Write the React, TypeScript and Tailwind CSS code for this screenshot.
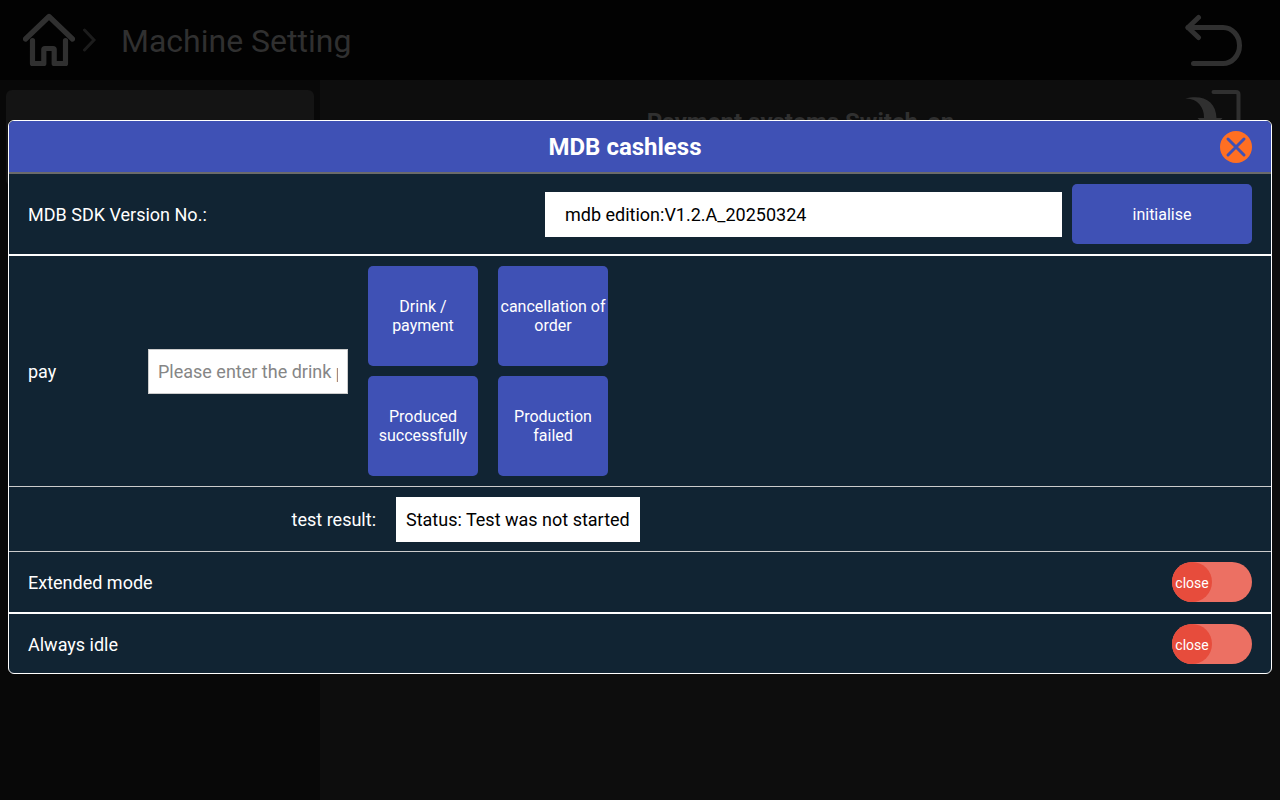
import React, { useState } from 'react';

const actions = ['Drink / payment', 'cancellation of order', 'Produced successfully', 'Production failed'];

function HomeIcon() {
    return (
        <svg width="52" height="54" viewBox="0 0 52 54" fill="none" stroke="currentColor" strokeWidth="5.2" strokeLinecap="round" strokeLinejoin="round">
            <path d="M2.500 26 L26 3.500 L49.500 26" />
            <path d="M9.500 27.500 V50.500 H20.800 V36.500 Q20.800 35.500 22 35.500 H30 Q31.200 35.500 31.200 36.500 V50.500 H42.500 V27.500" />
        </svg>
    );
}

function BackIcon() {
    return (
        <svg width="58" height="54" viewBox="0 0 58 54" fill="none" stroke="currentColor" strokeWidth="5" strokeLinecap="round" strokeLinejoin="round">
            <path d="M13.500 4.500 L3 14.500 L13.500 24.500" />
            <path d="M3 14.500 H38 A16.500 18 0 0 1 38 50.500 H8.500" />
        </svg>
    );
}

function ExitIcon() {
    return (
        <svg width="58" height="58" viewBox="0 0 58 58" fill="none">
            <path d="M28.500 2 H51 Q53.500 2 53.500 4.500 V56 H28.500" stroke="currentColor" strokeWidth="4" strokeLinecap="round" strokeLinejoin="round" />
            <path d="M0 8.500 C18 4 31 11 31.500 28 H37.500 L25 42 L12.500 28 H19 C19.500 17 12 8 0 8.500 Z" fill="currentColor" />
        </svg>
    );
}

function Toggle({ id }: { id: string }) {
    const [on, setOn] = useState(false);
    return (
        <label htmlFor={id} className="relative block h-10 w-20 shrink-0 cursor-pointer rounded-full bg-[#ec7063]">
            <input
                id={id}
                type="checkbox"
                role="switch"
                className="sr-only"
                checked={on}
                onChange={(e) => setOn(e.target.checked)}
            />
            <span className={`flex size-10 items-center justify-center rounded-full bg-[#e74c3c] pt-0.5 text-sm text-white ${on ? 'ml-10' : ''}`}>
                {on ? 'open' : 'close'}
            </span>
        </label>
    );
}

export default function App() {
    const [price, setPrice] = useState('');

    return (
        <div className="relative flex min-h-screen flex-col bg-[#0d0d0d] font-[Roboto,sans-serif]">
            {/* Barra superior */}
            <header className="flex h-20 items-center bg-[#020202] pr-[37px] pl-[23px] text-[#303030]">
                <a href="#home" aria-label="Home"><HomeIcon /></a>
                <svg className="ml-2" width="14" height="24" viewBox="0 0 14 24" fill="none" stroke="#1c1c1c" strokeWidth="3" strokeLinecap="round">
                    <path d="M1.500 2 L11 12 L1.500 22" />
                </svg>
                <h1 className="ml-6 flex-1 pt-0.5 text-[32px]">Machine Setting</h1>
                <button type="button" aria-label="Back"><BackIcon /></button>
            </header>

            {/* Contenido detrás del diálogo */}
            <div className="flex flex-1">
                <aside className="w-1/4 bg-[#080808] px-1.5 pt-2.5">
                    <div className="h-24 rounded-md bg-[#141414]" />
                </aside>
                <section className="flex flex-1 items-start pt-2.5 pr-[37px] text-[#303030]">
                    <h2 className="ml-24 flex-1 pt-4 text-center text-2xl font-bold">Payment systems Switch-on</h2>
                    <ExitIcon />
                </section>
            </div>

            {/* Diálogo */}
            <div className="absolute inset-0 flex items-start px-2 pt-[120px]">
                <div role="dialog" aria-labelledby="dialog-title" className="w-full overflow-hidden rounded-md border border-white bg-[#112433] text-lg text-white">
                    <div className="flex h-[53px] items-center border-b-2 border-[#6b6b6b] bg-[#3f51b5] px-[19px]">
                        <h2 id="dialog-title" className="flex-1 pl-0.5 text-center text-2xl font-bold">MDB cashless</h2>
                        <button type="button" aria-label="Close" className="rounded-full bg-[#ff6f22]">
                            <svg width="32" height="32" viewBox="0 0 32 32" stroke="#3f51b5" strokeWidth="3" strokeLinecap="round">
                                <path d="M8 8 L24 24 M24 8 L8 24" />
                            </svg>
                        </button>
                    </div>

                    <div className="flex h-[82px] items-center border-b-2 border-white px-[19px]">
                        <label htmlFor="version" className="flex-1 pt-0.5">MDB SDK Version No.:</label>
                        <div className="mr-2.5 flex flex-1">
                            <input
                                id="version"
                                readOnly
                                value="mdb edition:V1.2.A_20250324"
                                className="h-[45px] w-full bg-white px-5 text-black"
                            />
                        </div>
                        <button type="button" className="h-[60px] w-[180px] rounded-[5px] bg-[#3f51b5] pt-0.5 text-base">initialise</button>
                    </div>

                    <div className="flex items-center border-b border-[#cccccc] px-[19px] py-2.5">
                        <label htmlFor="price" className="w-[120px] pt-0.5">pay</label>
                        <input
                            id="price"
                            value={price}
                            onChange={(e) => setPrice(e.target.value)}
                            placeholder="Please enter the drink price"
                            className="mr-5 h-[45px] w-[200px] border border-[#cccccc] bg-white px-[9px] text-black placeholder:text-[#868686]"
                        />
                        <div className="grid grid-cols-2 gap-x-5 gap-y-2.5">
                            {actions.map((a) => (
                                <button key={a} type="button" className="h-[100px] w-[110px] rounded-[5px] bg-[#3f51b5] text-base leading-[19px]">
                                    {a}
                                </button>
                            ))}
                        </div>
                    </div>

                    <div className="flex h-[65px] items-center border-b border-[#cccccc] px-[19px]">
                        <span className="w-[348px] pt-0.5 text-right">test result:</span>
                        <output className="ml-5 flex h-[45px] items-center bg-white px-2.5 pt-0.5 text-black">Status: Test was not started</output>
                    </div>

                    <div className="flex items-center justify-between border-b-2 border-white px-[19px] py-2.5">
                        <label htmlFor="extended" className="pt-0.5">Extended mode</label>
                        <Toggle id="extended" />
                    </div>

                    <div className="flex h-[59px] items-center justify-between px-[19px]">
                        <label htmlFor="idle" className="pt-0.5">Always idle</label>
                        <Toggle id="idle" />
                    </div>
                </div>
            </div>
        </div>
    );
}
